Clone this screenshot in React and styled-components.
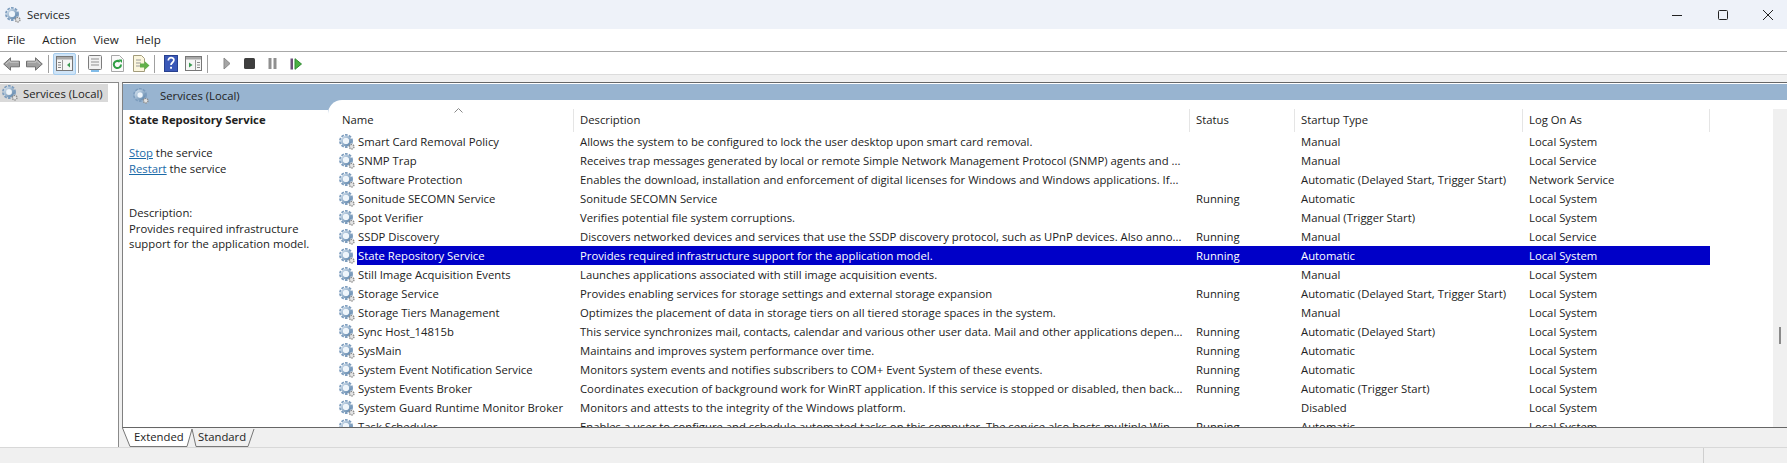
import styled, { createGlobalStyle } from "styled-components";

const services = [
  ["Smart Card Removal Policy", "Allows the system to be configured to lock the user desktop upon smart card removal.", "", "Manual", "Local System"],
  ["SNMP Trap", "Receives trap messages generated by local or remote Simple Network Management Protocol (SNMP) agents and ...", "", "Manual", "Local Service"],
  ["Software Protection", "Enables the download, installation and enforcement of digital licenses for Windows and Windows applications. If...", "", "Automatic (Delayed Start, Trigger Start)", "Network Service"],
  ["Sonitude SECOMN Service", "Sonitude SECOMN Service", "Running", "Automatic", "Local System"],
  ["Spot Verifier", "Verifies potential file system corruptions.", "", "Manual (Trigger Start)", "Local System"],
  ["SSDP Discovery", "Discovers networked devices and services that use the SSDP discovery protocol, such as UPnP devices. Also anno...", "Running", "Manual", "Local Service"],
  ["State Repository Service", "Provides required infrastructure support for the application model.", "Running", "Automatic", "Local System"],
  ["Still Image Acquisition Events", "Launches applications associated with still image acquisition events.", "", "Manual", "Local System"],
  ["Storage Service", "Provides enabling services for storage settings and external storage expansion", "Running", "Automatic (Delayed Start, Trigger Start)", "Local System"],
  ["Storage Tiers Management", "Optimizes the placement of data in storage tiers on all tiered storage spaces in the system.", "", "Manual", "Local System"],
  ["Sync Host_14815b", "This service synchronizes mail, contacts, calendar and various other user data. Mail and other applications depen...", "Running", "Automatic (Delayed Start)", "Local System"],
  ["SysMain", "Maintains and improves system performance over time.", "Running", "Automatic", "Local System"],
  ["System Event Notification Service", "Monitors system events and notifies subscribers to COM+ Event System of these events.", "Running", "Automatic", "Local System"],
  ["System Events Broker", "Coordinates execution of background work for WinRT application. If this service is stopped or disabled, then back...", "Running", "Automatic (Trigger Start)", "Local System"],
  ["System Guard Runtime Monitor Broker", "Monitors and attests to the integrity of the Windows platform.", "", "Disabled", "Local System"],
  ["Task Scheduler", "Enables a user to configure and schedule automated tasks on this computer. The service also hosts multiple Win...", "Running", "Automatic", "Local System"],
];

const GlobalStyle = createGlobalStyle`
  html, body { margin: 0; padding: 0; background: #fff; }
  * { box-sizing: border-box; }
`;

const Page = styled.div`
  width: 1787px;
  height: 463px;
  display: flex;
  flex-direction: column;
  overflow: hidden;
  font-family: "Open Sans", "Noto Sans", sans-serif;
  font-size: 11.3px;
  color: #222;
  background: #f0f0f0;
`;

const TitleBar = styled.div`
  height: 29px;
  flex: none;
  display: flex;
  align-items: center;
  padding-left: 5px;
  gap: 6px;
  background: #eef2f9;
`;

const WindowButtons = styled.div`
  margin-left: auto;
  display: flex;
  align-items: center;
  padding-right: 14px;
  gap: 35.5px;
`;

const MenuBar = styled.div`
  height: 23px;
  flex: none;
  display: flex;
  align-items: center;
  padding: 0 0 2px 7px;
  gap: 17px;
  font-size: 11.6px;
  background: #fff;
  border-bottom: 1px solid #a8a8a8;
`;

const Toolbar = styled.div`
  height: 23px;
  flex: none;
  display: flex;
  align-items: center;
  padding-top: 1px;
  background: #fff;
  border-bottom: 1px solid #dcdcdc;
`;

const ToolButton = styled.div`
  width: ${(p) => p.$w || 23}px;
  height: 22px;
  display: flex;
  align-items: center;
  justify-content: center;
  background: ${(p) => (p.$active ? "#cfe4f7" : "transparent")};
  border: 1px solid ${(p) => (p.$active ? "#a6cdee" : "transparent")};
  border-radius: 2px;
`;

const ToolSep = styled.div`
  width: 1px;
  height: 18px;
  margin: 0 ${(p) => p.$after || 4}px 0 2px;
  background: #a0a0a0;
`;

const Main = styled.div`
  flex: 1;
  min-height: 0;
  display: flex;
  padding-top: 7px;
`;

const NavPane = styled.div`
  width: 119px;
  flex: none;
  height: 366px;
  padding-top: 1px;
  background: #fff;
  border-top: 1px solid #8a8a8a;
  border-right: 1px solid #8a8a8a;
`;

const NavItem = styled.div`
  width: 108px;
  height: 18px;
  display: flex;
  align-items: center;
  gap: 5px;
  padding-left: 2px;
  background: #d9d9d9;
  white-space: nowrap;
`;

const Panel = styled.div`
  margin-left: 3px;
  flex: 1;
  min-width: 0;
  display: flex;
  flex-direction: column;
`;

const PanelFrame = styled.div`
  height: 346px;
  flex: none;
  display: flex;
  flex-direction: column;
  background: #fff;
  border-top: 1px solid #666;
  border-left: 1px solid #808080;
  border-bottom: 1px solid #666;
  overflow: hidden;
`;

const PanelHeader = styled.div`
  height: 16px;
  flex: none;
  margin-top: 1px;
  display: flex;
  align-items: flex-end;
  gap: 11px;
  padding-left: 10px;
  background: #98b4d0;
`;

const HeaderLabel = styled.span`
  position: relative;
  top: 4px;
  line-height: 16px;
`;

const HeaderIcon = styled.span`
  position: relative;
  top: 4px;
  height: 16px;
`;

const PanelBody = styled.div`
  flex: 1;
  min-height: 0;
  display: flex;
`;

const DetailPane = styled.div`
  width: 205px;
  flex: none;
  padding: 12px 0 0 6px;
  background: linear-gradient(#98b4d0 10px, #fff 10px);
  line-height: 15.4px;
`;

const DetailTitle = styled.div`
  font-weight: 700;
  margin-bottom: 18px;
`;

const DetailBlock = styled.div`
  margin-bottom: ${(p) => p.$gap || 0}px;
`;

const Link = styled.a`
  color: #1a6aa8;
  text-decoration: underline;
`;

const ListArea = styled.div`
  flex: 1;
  min-width: 0;
  display: flex;
  background: linear-gradient(#98b4d0 14px, #fff 14px);
`;

const ListPane = styled.div`
  flex: 1;
  min-width: 0;
  display: flex;
  background: #fff;
  border-top-left-radius: 14px;
`;

const Table = styled.div`
  width: 1381px;
  flex: none;
  padding: 9px 0 0 8px;
`;

const grid = `
  display: grid;
  grid-template-columns: 238px 616px 105px 228px 187px;
`;

const HeaderRow = styled.div`
  ${grid}
  height: 23px;
  position: relative;
`;

const HeaderCell = styled.div`
  padding: 2px 0 0 6px;
  border-right: 1px solid #e5e5e5;
  line-height: 18px;
`;

const SortCaret = styled.svg`
  position: absolute;
  left: 118px;
  top: -1px;
`;

const Row = styled.div`
  ${grid}
  height: 19px;
  line-height: 19px;
  white-space: nowrap;
  position: relative;
  color: ${(p) => (p.$selected ? "#fff" : "#222")};
`;

const NameCell = styled.div`
  display: flex;
  align-items: center;
  gap: 2px;
  padding-left: 3px;
  min-width: 0;
  overflow: hidden;
`;

const NameText = styled.span`
  flex: 1;
  height: 19px;
  padding-left: 1px;
  background: ${(p) => (p.$selected ? "#0000c8" : "transparent")};
`;

const Cell = styled.div`
  padding-left: 6px;
  overflow: hidden;
  background: ${(p) => (p.$selected ? "#0000c8" : "transparent")};
`;

const ScrollBar = styled.div`
  width: 14px;
  flex: none;
  margin-left: auto;
  background: #f0f0f0;
  margin-top: 9px;
  padding: 218px 0 0 6px;
`;

const ScrollThumb = styled.div`
  width: 2px;
  height: 17px;
  background: #8a8a8a;
`;

const Tabs = styled.div`
  height: 19px;
  flex: none;
  display: flex;
`;

const Tab = styled.div`
  position: relative;
  width: ${(p) => p.$w}px;
  height: 19px;
  padding-left: ${(p) => p.$pad}px;
  line-height: 18px;
`;

const TabShape = styled.svg`
  position: absolute;
  left: 0;
  top: 0;
  z-index: 0;
`;

const TabLabel = styled.span`
  position: relative;
  z-index: 1;
`;

const StatusBar = styled.div`
  height: 16px;
  flex: none;
  display: flex;
  justify-content: flex-end;
  border-top: 1px solid #d8d8d8;
  background: #f0f0f0;
`;

const StatusEnd = styled.div`
  width: 84px;
  border-left: 1px solid #cfcfcf;
`;

const GearIcon = ({ size = 16 }) => (
  <svg width={size} height={size} viewBox="0 0 16 16" style={{ flex: "none" }}>
    <defs>
      <linearGradient id="gearRing" x1="0" y1="0" x2="1" y2="1">
        <stop offset="0" stopColor="#cfdeec" />
        <stop offset="1" stopColor="#6288ad" />
      </linearGradient>
    </defs>
    <circle cx="7" cy="7" r="6" fill="none" stroke="#7d9dbe" strokeWidth="2" strokeDasharray="2.6 1.2" />
    <circle cx="7" cy="7" r="4.2" fill="none" stroke="url(#gearRing)" strokeWidth="2.4" />
    <circle cx="7" cy="7" r="2.7" fill="#eef5fb" />
    <circle cx="12.7" cy="12.7" r="2.3" fill="#e4e4e4" stroke="#8c8c8c" strokeWidth="1.3" strokeDasharray="1.4 0.8" />
  </svg>
);

const ArrowIcon = ({ flip }) => (
  <svg width="17" height="14" viewBox="0 0 17 14" style={{ transform: flip ? "scaleX(-1)" : "none" }}>
    <path d="M.7 7 7.5.8v3.4h9v5.6h-9v3.4z" fill="#a0a0a0" stroke="#6f6f6f" />
    <path d="M3 7 7 3.6V5.2h8.5" fill="none" stroke="#c8c8c8" />
  </svg>
);

const PaneIcon = ({ right }) => (
  <svg width="17" height="15" viewBox="0 0 17 15">
    <rect x="0.5" y="0.5" width="16" height="14" fill="#f6f6f6" stroke="#777" />
    <rect x="1" y="1" width="15" height="2.5" fill="#a8a8a8" />
    <path d={right ? "M10.5 4v10" : "M6.5 4v10"} stroke="#999" />
    <path d={right ? "M4 6.5 7.5 9 4 11.5z" : "M14 6.5 11 9l3 2.5z"} fill="#3c9a52" />
    <path d={right ? "M12 6.5h3M12 9h3M12 11.5h3" : "M2 6.5h3M2 9h3M2 11.5h3"} stroke="#888" />
  </svg>
);

const ListIcon = () => (
  <svg width="16" height="17" viewBox="0 0 16 17">
    <rect x="1.5" y="0.5" width="13" height="14" rx="1" fill="#f2f2f2" stroke="#7c7c7c" />
    <path d="M4 4h8M4 7h8M4 10h8" stroke="#8f8f8f" />
    <path d="M4 16h8" stroke="#58a6e0" strokeWidth="1.5" />
  </svg>
);

const RefreshIcon = () => (
  <svg width="15" height="17" viewBox="0 0 15 17">
    <path d="M1.5.5h8l4 4v12h-12z" fill="#fafafa" stroke="#a8a8a8" />
    <path d="M11 9.5a3.6 3.6 0 1 1-1.2-2.7" fill="none" stroke="#2f9e44" strokeWidth="2" />
    <path d="M8.5 4.5h3.5v3.5z" fill="#2f9e44" />
  </svg>
);

const ExportIcon = () => (
  <svg width="18" height="17" viewBox="0 0 18 17">
    <path d="M1.5.5h8l3 3v13h-11z" fill="#fbf6dd" stroke="#a39c7c" />
    <path d="M4 5h5M4 8h5M4 11h4" stroke="#9a9a9a" />
    <path d="M8 8.5h4.5V6l5 4.5-5 4.5v-2.5H8z" fill="#62b04a" />
  </svg>
);

const HelpIcon = () => (
  <svg width="14" height="17" viewBox="0 0 14 17">
    <rect x="0.5" y="0.5" width="13" height="16" fill="#3a58b8" stroke="#27408e" />
    <path d="M4.3 5.5c0-4 5.6-3.6 5.6-.4 0 2.4-2.9 2.4-2.9 5" fill="none" stroke="#fff" strokeWidth="1.7" />
    <rect x="6.1" y="11.8" width="1.9" height="1.9" fill="#fff" />
  </svg>
);

const PlayIcon = () => (
  <svg width="8" height="13" viewBox="0 0 8 13">
    <path d="M1 1 7 6.5 1 12z" fill="#a5a5a5" stroke="#8a8a8a" />
  </svg>
);

const StopIcon = () => (
  <svg width="11" height="11" viewBox="0 0 11 11">
    <rect width="11" height="11" rx="1.5" fill="#3e3e3e" />
  </svg>
);

const PauseIcon = () => (
  <svg width="9" height="11" viewBox="0 0 9 11">
    <rect x="0.5" width="3" height="11" fill="#8f8f8f" />
    <rect x="5.5" width="3" height="11" fill="#8f8f8f" />
  </svg>
);

const ResumeIcon = () => (
  <svg width="12" height="12" viewBox="0 0 12 12">
    <rect x="0.5" y="0.5" width="2.5" height="11" fill="#6b4f78" />
    <path d="M5 .7 11.5 6 5 11.3z" fill="#4cb044" stroke="#2f8a32" />
  </svg>
);

const MinimizeIcon = () => (
  <svg width="10" height="10" viewBox="0 0 10 10">
    <path d="M0 5.5h10" stroke="#222" />
  </svg>
);

const MaximizeIcon = () => (
  <svg width="10" height="10" viewBox="0 0 10 10">
    <rect x="0.5" y="0.5" width="9" height="9" rx="1" fill="none" stroke="#222" />
  </svg>
);

const CloseIcon = () => (
  <svg width="10" height="10" viewBox="0 0 10 10">
    <path d="M0 0l10 10M10 0 0 10" stroke="#222" />
  </svg>
);

const App = () => {
  return (
    <Page>
      <GlobalStyle />
      <TitleBar>
        <GearIcon />
        <span>Services</span>
        <WindowButtons>
          <MinimizeIcon />
          <MaximizeIcon />
          <CloseIcon />
        </WindowButtons>
      </TitleBar>
      <MenuBar>
        <span>File</span>
        <span>Action</span>
        <span>View</span>
        <span>Help</span>
      </MenuBar>
      <Toolbar>
        <ToolButton><ArrowIcon /></ToolButton>
        <ToolButton><ArrowIcon flip /></ToolButton>
        <ToolSep />
        <ToolButton $active><PaneIcon /></ToolButton>
        <ToolSep />
        <ToolButton><ListIcon /></ToolButton>
        <ToolButton><RefreshIcon /></ToolButton>
        <ToolButton><ExportIcon /></ToolButton>
        <ToolSep />
        <ToolButton><HelpIcon /></ToolButton>
        <ToolButton><PaneIcon right /></ToolButton>
        <ToolSep $after={7} />
        <ToolButton><PlayIcon /></ToolButton>
        <ToolButton><StopIcon /></ToolButton>
        <ToolButton><PauseIcon /></ToolButton>
        <ToolButton><ResumeIcon /></ToolButton>
      </Toolbar>
      <Main>
        <NavPane>
          <NavItem>
            <GearIcon />
            <span>Services (Local)</span>
          </NavItem>
        </NavPane>
        <Panel>
          <PanelFrame>
            <PanelHeader>
              <HeaderIcon><GearIcon /></HeaderIcon>
              <HeaderLabel>Services (Local)</HeaderLabel>
            </PanelHeader>
            <PanelBody>
              <DetailPane>
                <DetailTitle>State Repository Service</DetailTitle>
                <DetailBlock><Link>Stop</Link> the service</DetailBlock>
                <DetailBlock $gap={29}><Link>Restart</Link> the service</DetailBlock>
                <DetailBlock>Description:</DetailBlock>
                <DetailBlock>Provides required infrastructure</DetailBlock>
                <DetailBlock>support for the application model.</DetailBlock>
              </DetailPane>
              <ListArea>
                <ListPane>
                  <Table>
                    <HeaderRow>
                      <SortCaret width="9" height="5" viewBox="0 0 9 5">
                        <path d="M.5 4.5 4.5.5l4 4" fill="none" stroke="#888" />
                      </SortCaret>
                      <HeaderCell>Name</HeaderCell>
                      <HeaderCell>Description</HeaderCell>
                      <HeaderCell>Status</HeaderCell>
                      <HeaderCell>Startup Type</HeaderCell>
                      <HeaderCell>Log On As</HeaderCell>
                    </HeaderRow>
                    {services.map((service) => {
                      const [name, desc, status, startup, logon] = service;
                      const selected = name === "State Repository Service";
                      return (
                        <Row key={name} $selected={selected}>
                          <NameCell>
                            <GearIcon />
                            <NameText $selected={selected}>{name}</NameText>
                          </NameCell>
                          <Cell $selected={selected}>{desc}</Cell>
                          <Cell $selected={selected}>{status}</Cell>
                          <Cell $selected={selected}>{startup}</Cell>
                          <Cell $selected={selected}>{logon}</Cell>
                        </Row>
                      );
                    })}
                  </Table>
                  <ScrollBar>
                    <ScrollThumb />
                  </ScrollBar>
                </ListPane>
              </ListArea>
            </PanelBody>
          </PanelFrame>
          <Tabs>
            <Tab $w={69} $pad={12}>
              <TabShape width="72" height="19" viewBox="0 0 72 19">
                <path d="M.5 0 8 18.5h57L70 1" fill="#fff" stroke="#777" />
              </TabShape>
              <TabLabel>Extended</TabLabel>
            </Tab>
            <Tab $w={66} $pad={7}>
              <TabShape width="66" height="19" viewBox="0 0 66 19">
                <path d="M1 1 5 18.5h52L63 1" fill="none" stroke="#777" />
              </TabShape>
              <TabLabel>Standard</TabLabel>
            </Tab>
          </Tabs>
        </Panel>
      </Main>
      <StatusBar>
        <StatusEnd />
      </StatusBar>
    </Page>
  );
};

export default App;
